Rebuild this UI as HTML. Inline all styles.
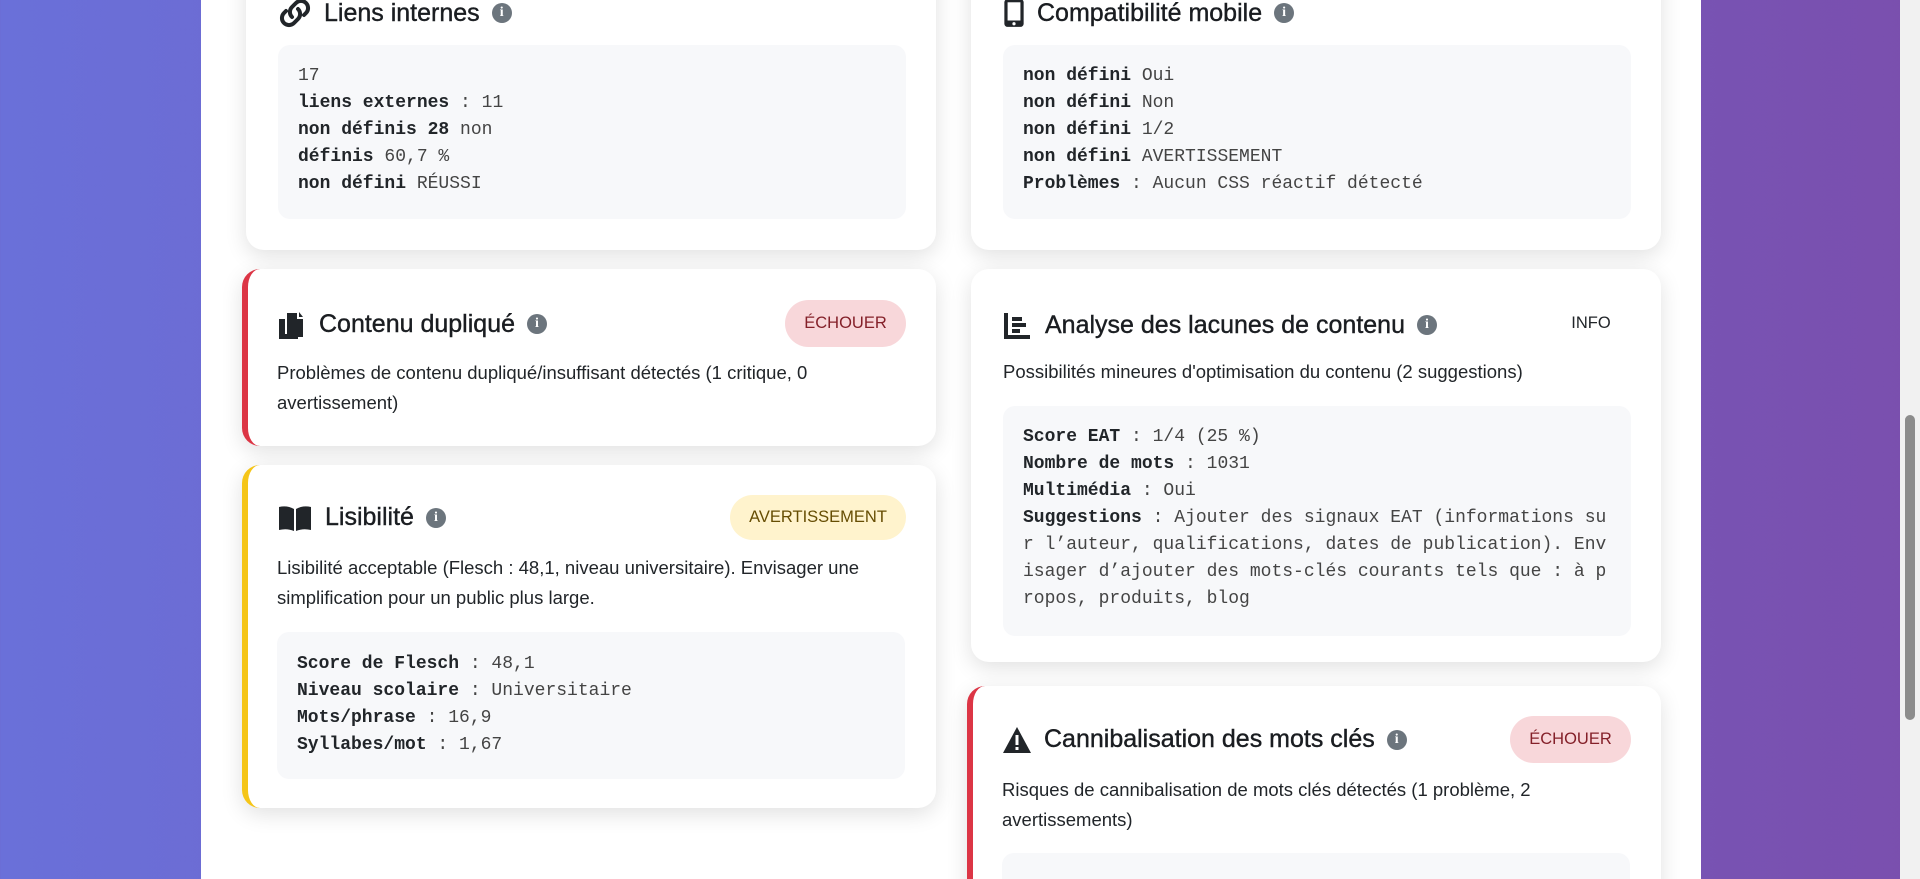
<!DOCTYPE html>
<html><head><meta charset="utf-8"><style>
*{box-sizing:border-box;margin:0;padding:0}
html,body{width:1920px;height:879px;overflow:hidden}
body{background:linear-gradient(90deg,#6a70d9,#7a4fae);font-family:"Liberation Sans",sans-serif;color:#212529;position:relative}
.wrap{position:absolute;left:201px;top:0;width:1500px;height:879px;background:#fff}
.card{position:absolute;background:#fff;border-radius:18px;box-shadow:0 6px 22px rgba(0,0,0,.12);width:690px}
.red{border-left:6px solid #dc3545}
.yel{border-left:6px solid #f5c518}
.t{position:absolute;left:32px;display:flex;align-items:center;font-size:25px;color:#1a1d21;-webkit-text-stroke:0.4px #1a1d21}
.red .t,.yel .t,.red .d,.yel .d,.red .code,.yel .code{left:29px}
.t svg{margin-right:12px}
.i{display:inline-block;width:20px;height:20px;border-radius:50%;background:#6c757d;color:#fff;font-size:14px;font-weight:bold;text-align:center;line-height:20px;margin-left:12px;font-family:"Liberation Serif",serif;-webkit-text-stroke:0}
.d{position:absolute;left:32px;right:30px;font-size:18.5px;line-height:30px;color:#212529}
.code{position:absolute;left:32px;width:628px;background:#f7f8fa;border-radius:12px;padding:0 20px;font-family:"Liberation Mono",monospace;font-size:18px;line-height:27px;color:#444}
.code b{color:#212529}
.badge{position:absolute;border-radius:24px;font-size:16.5px;text-align:center}
.sb{position:absolute;left:1900px;top:0;width:20px;height:879px;background:#f1f1f1}
.sb div{position:absolute;left:5px;top:415px;width:10px;height:305px;background:#8c8c8c;border-radius:5px}
</style></head><body>
<div class="wrap"></div>

<div class="card" style="left:246px;top:-60px;height:310px">
 <div class="t" style="top:58px"><svg width="34" height="30" viewBox="0 0 34 28"><path d="M14 18a7 7 0 0 1 0-10l4-4a7 7 0 0 1 10 10l-2 2M20 10a7 7 0 0 1 0 10l-4 4A7 7 0 0 1 6 14l2-2" fill="none" stroke="#212529" stroke-width="4" stroke-linecap="round"/></svg>Liens internes<span class="i">i</span></div>
 <div class="code" style="top:105px;height:174px;padding-top:18px">17<br><b>liens externes</b> : 11<br><b>non définis 28</b> non<br><b>définis</b> 60,7 %<br><b>non défini</b> RÉUSSI</div>
</div>

<div class="card" style="left:971px;top:-60px;height:310px">
 <div class="t" style="top:58px"><svg width="22" height="30" viewBox="0 0 20 28"><rect x="1" y="1" width="18" height="26" rx="3" fill="#212529"/><rect x="4" y="4" width="12" height="17" fill="#fff"/><circle cx="10" cy="24" r="1.5" fill="#fff"/></svg>Compatibilité mobile<span class="i">i</span></div>
 <div class="code" style="top:105px;height:174px;padding-top:18px"><b>non défini</b> Oui<br><b>non défini</b> Non<br><b>non défini</b> 1/2<br><b>non défini</b> AVERTISSEMENT<br><b>Problèmes</b> : Aucun CSS réactif détecté</div>
</div>

<div class="card red" style="left:242px;top:269px;width:694px;height:177px">
 <div class="t" style="top:38px"><svg width="30" height="34" viewBox="0 0 30 32"><path d="M10 5h10v6h6v18H10z" fill="#212529"/><path d="M22 4l4 5h-4z" fill="#212529"/><path d="M2 11h6v15h13v5H2z" fill="#212529"/></svg>Contenu dupliqué<span class="i">i</span></div>
 <div class="badge" style="left:537px;top:31px;width:121px;height:47px;line-height:47px;background:#f8d7da;color:#842029">ÉCHOUER</div>
 <div class="d" style="top:89px">Problèmes de contenu dupliqué/insuffisant détectés (1 critique, 0 avertissement)</div>
</div>

<div class="card yel" style="left:242px;top:465px;width:694px;height:343px">
 <div class="t" style="top:38px"><svg width="36" height="28" viewBox="0 0 34 28"><path d="M1 3q8-2 15 2v22q-7-3-15-1zM33 3q-8-2-15 2v22q7-3 15-1z" fill="#212529"/></svg>Lisibilité<span class="i">i</span></div>
 <div class="badge" style="left:482px;top:30px;width:176px;height:45px;line-height:45px;background:#fff3cd;color:#664d03">AVERTISSEMENT</div>
 <div class="d" style="top:88px">Lisibilité acceptable (Flesch : 48,1, niveau universitaire). Envisager une simplification pour un public plus large.</div>
 <div class="code" style="top:167px;height:147px;padding-top:19px"><b>Score de Flesch</b> : 48,1<br><b>Niveau scolaire</b> : Universitaire<br><b>Mots/phrase</b> : 16,9<br><b>Syllabes/mot</b> : 1,67</div>
</div>

<div class="card" style="left:971px;top:269px;height:393px">
 <div class="t" style="top:41px"><svg width="30" height="30" viewBox="0 0 30 30"><path d="M3 3v24h24" fill="none" stroke="#212529" stroke-width="4"/><rect x="9" y="7" width="10" height="4" fill="#212529"/><rect x="9" y="13" width="14" height="4" fill="#212529"/><rect x="9" y="19" width="8" height="4" fill="#212529"/></svg>Analyse des lacunes de contenu<span class="i">i</span></div>
 <div class="badge" style="left:585px;top:31px;width:70px;height:47px;line-height:47px;color:#212529">INFO</div>
 <div class="d" style="top:88px">Possibilités mineures d'optimisation du contenu (2 suggestions)</div>
 <div class="code" style="top:137px;height:230px;padding-top:18px;word-break:break-all"><b>Score EAT</b> : 1/4 (25 %)<br><b>Nombre de mots</b> : 1031<br><b>Multimédia</b> : Oui<br><b>Suggestions</b> : Ajouter des signaux EAT (informations sur l’auteur, qualifications, dates de publication). Envisager d’ajouter des mots-clés courants tels que : à propos, produits, blog</div>
</div>

<div class="card red" style="left:967px;top:686px;width:694px;height:260px">
 <div class="t" style="top:39px"><svg width="30" height="28" viewBox="0 0 30 28"><path d="M15 1L29 27H1z" fill="#212529"/><rect x="13.5" y="9" width="3" height="10" fill="#fff"/><rect x="13.5" y="21" width="3" height="3" fill="#fff"/></svg>Cannibalisation des mots clés<span class="i">i</span></div>
 <div class="badge" style="left:537px;top:30px;width:121px;height:47px;line-height:47px;background:#f8d7da;color:#842029">ÉCHOUER</div>
 <div class="d" style="top:89px">Risques de cannibalisation de mots clés détectés (1 problème, 2 avertissements)</div>
 <div class="code" style="top:167px;height:100px"></div>
</div>

<div class="sb"><div></div></div>
</body></html>
